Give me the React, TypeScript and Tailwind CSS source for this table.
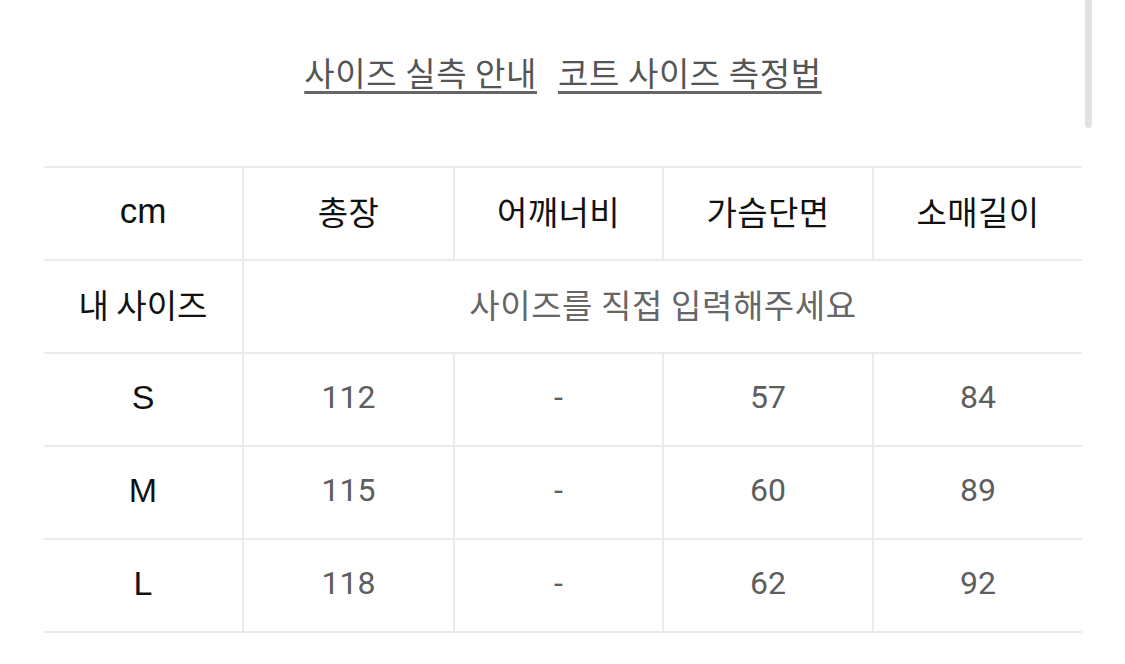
import React from "react";

const rows = [
  { size: "S", v: ["112", "-", "57", "84"] },
  { size: "M", v: ["115", "-", "60", "89"] },
  { size: "L", v: ["118", "-", "62", "92"] },
];

const headers = ["총장", "어깨너비", "가슴단면", "소매길이"];

const labelFont = { fontFamily: '"Liberation Sans", "Noto Sans CJK KR", sans-serif' };
const krFont = { fontFamily: '"Noto Sans CJK KR", sans-serif' };

export default function App() {
  return (
    <div className="relative w-[1125px] h-[664px] bg-white overflow-hidden">
      <div className="absolute right-[33px] top-0 w-[7px] h-[128px] rounded-b-full bg-[#e2e2e2]" />
      <div className="pl-[44px] pr-[43px]">
        <div
          className="flex justify-center gap-[21px] pt-[53px] h-[166px] text-[33px] leading-[38px] tracking-[0.6px] text-[#555]"
          style={krFont}
        >
          <span className="underline decoration-[3px] underline-offset-[5px] decoration-[#666]">사이즈 실측 안내</span>
          <span className="underline decoration-[3px] underline-offset-[5px] decoration-[#666]">코트 사이즈 측정법</span>
        </div>
        <table className="w-[1038px] border-collapse table-fixed">
          <colgroup>
            <col className="w-[199px]" />
            <col className="w-[211px]" />
            <col className="w-[209px]" />
            <col className="w-[210px]" />
            <col className="w-[209px]" />
          </colgroup>
          <tbody>
            <tr className="h-[93px] border-t-2 border-b-2 border-[#ebebeb]">
              <td className="pb-[5px] text-center text-[35px] leading-[40px] text-[#111]" style={labelFont}>cm</td>
              {headers.map((h) => (
                <td key={h} className="pb-[5px] text-center text-[33px] leading-[40px] tracking-[0.4px] text-[#111] border-l-2 border-[#ebebeb]" style={krFont}>
                  {h}
                </td>
              ))}
            </tr>
            <tr className="h-[93px] border-b-2 border-[#ebebeb]">
              <td className="pb-[5px] text-center text-[33px] leading-[40px] text-[#111]" style={krFont}>내 사이즈</td>
              <td colSpan={4} className="pb-[5px] text-center text-[33px] leading-[40px] tracking-[0.6px] text-[#666] border-l-2 border-[#ebebeb]" style={krFont}>
                사이즈를 직접 입력해주세요
              </td>
            </tr>
            {rows.map((r) => (
              <tr key={r.size} className="h-[93px] border-b-2 border-[#ebebeb]">
                <td className="pb-[5px] text-center text-[34px] leading-[40px] text-[#111]" style={labelFont}>{r.size}</td>
                {r.v.map((x, i) => (
                  <td key={i} className="pb-[5px] text-center text-[32px] leading-[40px] text-[#5e5e5e] border-l-2 border-[#ebebeb]" style={{ fontFamily: 'Roboto, sans-serif' }}>
                    {x}
                  </td>
                ))}
              </tr>
            ))}
          </tbody>
        </table>
      </div>
    </div>
  );
}
